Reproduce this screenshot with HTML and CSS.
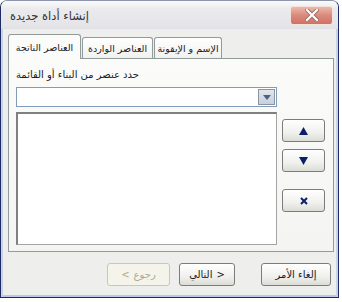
FILE: index.html
```html
<!DOCTYPE html>
<html lang="ar">
<head>
    <meta charset="UTF-8">
    <title>إنشاء أداة جديدة</title>
    <link rel="stylesheet" href="styles.css">
</head>
<body>

<div class="window">
    <div class="titlebar">
        <span class="title">إنشاء أداة جديدة</span>
        <span class="close-btn">
            <svg width="14" height="12" viewBox="0 0 14 12">
                <path d="M2 1 L12 11 M12 1 L2 11" stroke="#9a6a62" stroke-width="4" stroke-linecap="square"/>
                <path d="M2 1 L12 11 M12 1 L2 11" stroke="#ffffff" stroke-width="2.2" stroke-linecap="square"/>
            </svg>
        </span>
    </div>

    <div class="body">
        <div class="tabs">
            <div class="tab active">العناصر الناتجة</div>
            <div class="tab">العناصر الواردة</div>
            <div class="tab">الإسم و الإيقونة</div>
        </div>

        <div class="panel">
            <div class="label">حدد عنصر من البناء أو القائمة</div>
            <div class="row">
                <div class="lists">
                    <div class="combo">
                        <span class="combo-btn">
                            <svg width="8" height="5" viewBox="0 0 8 5"><path d="M0 0 H8 L4 5 Z" fill="#4d6185"/></svg>
                        </span>
                    </div>
                    <div class="listbox"></div>
                </div>
                <div class="side">
                    <button class="btn side-btn">
                        <svg width="9" height="8" viewBox="0 0 9 8"><path d="M4.5 0 L9 8 H0 Z" fill="#0b1f6b"/></svg>
                    </button>
                    <button class="btn side-btn">
                        <svg width="9" height="8" viewBox="0 0 9 8"><path d="M0 0 H9 L4.5 8 Z" fill="#0b1f6b"/></svg>
                    </button>
                    <button class="btn side-btn remove">
                        <svg width="8" height="8" viewBox="0 0 8 8"><path d="M1 1 L7 7 M7 1 L1 7" stroke="#0b1f6b" stroke-width="2"/></svg>
                    </button>
                </div>
            </div>
        </div>

        <div class="footer">
            <button class="btn back" disabled><span>&lt;</span><span>رجوع</span></button>
            <button class="btn next"><span>التالي</span><span>&gt;</span></button>
            <button class="btn cancel"><span>إلغاء الأمر</span></button>
        </div>
    </div>
</div>

</body>
</html>
```

FILE: styles.css
```css
body {
    margin: 0;
    padding: 0;
    background-color: #ffffff;
    font-family: "DejaVu Sans", sans-serif;
    font-size: 10.5px;
    color: #1a1a1a;
}
.window {
    width: 339px;
    height: 298px;
    box-sizing: border-box;
    border: 1px solid #1d2c66;
    border-top-color: #8c95ab;
    border-radius: 7px 7px 0 0;
    background-color: #eeeeec;
    box-shadow: inset 2px 0 0 #c9d3e6, inset -2px 0 0 #c9d3e6, inset 0 -2px 0 #b9c8e6;
    overflow: hidden;
}
.titlebar {
    height: 27px;
    display: flex;
    align-items: center;
    justify-content: space-between;
    padding: 0 5px 0 9px;
    background: linear-gradient(#fbfbfc, #ebebee 30%, #e4e4e8);
    border-bottom: 1px solid #e0e0e4;
}
.title {
    font-size: 11.5px;
    color: #333333;
    padding-top: 2px;
}
.close-btn {
    width: 43px;
    height: 19px;
    box-sizing: border-box;
    margin-top: 1px;
    border: 1px solid #f4e2dc;
    border-radius: 3px;
    background: linear-gradient(#eeb8ac, #da8a7c 50%, #cf7263);
    display: flex;
    align-items: center;
    justify-content: center;
}
.body {
    padding: 0 4px 3px 3px;
}
.tabs {
    display: flex;
    align-items: flex-end;
    height: 24px;
    margin-top: 5px;
    padding-left: 4px;
    position: relative;
    z-index: 1;
}
.tab {
    height: 21px;
    box-sizing: border-box;
    margin-left: 1px;
    border: 1px solid #919b9c;
    border-bottom: none;
    border-radius: 3px 3px 0 0;
    background: linear-gradient(#ffffff, #f1f1ee);
    display: flex;
    align-items: center;
    justify-content: center;
    white-space: nowrap;
    font-size: 9.5px;
    width: 71px;
}
.tab:last-child {
    width: 68px;
}
.tab.active {
    height: 25px;
    width: 73px;
    margin-left: 0;
    margin-bottom: -1px;
    background: #fbfbfa;
}
.panel {
    width: 326px;
    height: 194px;
    box-sizing: border-box;
    margin-left: 4px;
    border: 1px solid #919b9c;
    background: linear-gradient(#fbfbfa, #f4f4f2);
    padding: 9px 0 0 7px;
}
.label {
    height: 14px;
    line-height: 14px;
    font-size: 10px;
}
.row {
    display: flex;
    margin-top: 5px;
}
.lists {
    width: 261px;
}
.combo {
    height: 20px;
    box-sizing: border-box;
    border: 1px solid #7f9db9;
    background: #ffffff;
    display: flex;
    justify-content: flex-end;
    padding: 1px;
}
.combo-btn {
    width: 17px;
    box-sizing: border-box;
    border: 1px solid #8c93a1;
    background: linear-gradient(#e2e6ec, #c8d0dc);
    display: flex;
    align-items: center;
    justify-content: center;
}
.listbox {
    height: 133px;
    box-sizing: border-box;
    margin-top: 5px;
    border: 1px solid #a4a4a4;
    border-top: 2px solid #808080;
    border-left: 2px solid #808080;
    background: #ffffff;
}
.side {
    display: flex;
    flex-direction: column;
    gap: 7px;
    margin-left: 5px;
    padding-top: 32px;
}
.btn {
    height: 23px;
    box-sizing: border-box;
    border: 1px solid #7c7c7c;
    border-radius: 3px;
    background: linear-gradient(#ffffff, #f0f0ee 60%, #dcdcd6);
    font-family: "DejaVu Sans", sans-serif;
    font-size: 10px;
    color: #1a1a1a;
    padding: 0;
    display: flex;
    align-items: center;
    justify-content: center;
    gap: 4px;
    direction: ltr;
}
.side-btn {
    width: 43px;
}
.side-btn.remove {
    margin-top: 10px;
}
.footer {
    display: flex;
    justify-content: flex-end;
    gap: 9px;
    margin-top: 11px;
    padding-right: 3px;
}
.back {
    width: 63px;
    border-color: #c9c7ba;
    background: #f5f4ea;
    color: #aca899;
}
.next {
    width: 56px;
}
.cancel {
    width: 70px;
    margin-left: 17px;
}
```
